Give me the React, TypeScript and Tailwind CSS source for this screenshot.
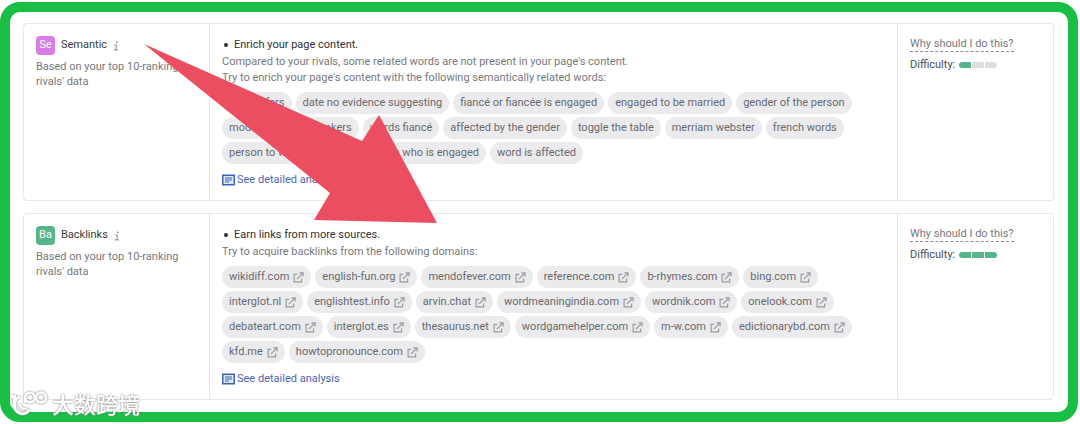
import type { ReactNode } from "react";

interface Suggestion {
  code: string;
  name: string;
  badge: string;
  title: string;
  lines: string[];
  chips: string[];
  external: boolean;
  difficulty: number;
}

const suggestions: Suggestion[] = [
  {
    code: "Se",
    name: "Semantic",
    badge: "bg-[#d87ce6]",
    title: "Enrich your page content.",
    lines: [
      "Compared to your rivals, some related words are not present in your page's content.",
      "Try to enrich your page's content with the following semantically related words:",
    ],
    chips: [
      "word refers",
      "date no evidence suggesting",
      "fiancé or fiancée is engaged",
      "engaged to be married",
      "gender of the person",
      "modern english speakers",
      "words fiancé",
      "affected by the gender",
      "toggle the table",
      "merriam webster",
      "french words",
      "person to whom",
      "man or woman who is engaged",
      "word is affected",
    ],
    external: false,
    difficulty: 1,
  },
  {
    code: "Ba",
    name: "Backlinks",
    badge: "bg-[#57b58b]",
    title: "Earn links from more sources.",
    lines: ["Try to acquire backlinks from the following domains:"],
    chips: [
      "wikidiff.com",
      "english-fun.org",
      "mendofever.com",
      "reference.com",
      "b-rhymes.com",
      "bing.com",
      "interglot.nl",
      "englishtest.info",
      "arvin.chat",
      "wordmeaningindia.com",
      "wordnik.com",
      "onelook.com",
      "debateart.com",
      "interglot.es",
      "thesaurus.net",
      "wordgamehelper.com",
      "m-w.com",
      "edictionarybd.com",
      "kfd.me",
      "howtopronounce.com",
    ],
    external: true,
    difficulty: 3,
  },
];

const ExternalIcon = () => (
  <svg viewBox="0 0 12 12" className="size-[11px] shrink-0" fill="none" stroke="#999a9e" strokeWidth="1.3">
    <path d="M4.6 2.6H1.2v8.2h8.2V7.2" />
    <path d="M4.2 7.8 10.6 1.4" />
    <path d="M7 1h4v4" />
  </svg>
);

const AnalysisIcon = () => (
  <svg viewBox="0 0 13 12" className="h-3 w-[13px] shrink-0" fill="none" stroke="#3d63b5">
    <rect x="0.75" y="1.25" width="11.5" height="9.5" fill="#dfe8f8" strokeWidth="1.5" />
    <path d="M3 4h7M3 6h7M3 8h4" strokeWidth="1.1" />
  </svg>
);

const Chip = ({ children }: { children: ReactNode }) => (
  <li className="flex h-[22px] items-center rounded-full bg-[#ebebed] px-[7px] text-[#68696d]">
    {children}
  </li>
);

const Difficulty = ({ level }: { level: number }) => (
  <div className="mt-1 flex items-center gap-1 leading-4 text-[#4b4c50]">
    <span>Difficulty:</span>
    <span className="flex gap-px overflow-hidden rounded-full" role="img" aria-label={`${level} of 3`}>
      {[1, 2, 3].map((step) => (
        <span
          key={step}
          className={`h-1.5 w-[12px] ${step <= level ? "bg-[#57b58b]" : "bg-[#dfdfe3]"}`}
        />
      ))}
    </span>
  </div>
);

const SuggestionCard = ({ item }: { item: Suggestion }) => (
  <section className="grid grid-cols-[185px_1fr_155px] rounded border border-[#e8e8ea]">
    <div className="py-3 pl-3 pr-4">
      <div className="flex items-center">
        <span
          className={`flex size-[19px] items-center justify-center rounded text-[11px] text-white ${item.badge}`}
        >
          {item.code}
        </span>
        <h2 className="ml-1.5 text-[#3b3c40]">{item.name}</h2>
        <button type="button" aria-label={`About ${item.name}`} className="ml-1.5">
          <svg viewBox="0 0 6 10" className="h-2.5 w-1.5" fill="none" stroke="#8b8c90" strokeWidth="1">
            <path d="M1.2 4h2.3L2.8 8.9M0.6 8.9h4.4" />
            <circle cx="3.8" cy="1.3" r="0.5" fill="#8b8c90" />
          </svg>
        </button>
      </div>
      <p className="mt-1 leading-[15px]">Based on your top 10-ranking rivals' data</p>
    </div>

    <div className="border-x border-[#e8e8ea] px-3 py-3">
      <ul className="list-none">
        <li className="flex items-center gap-1.5 pl-0.5 leading-[18px] text-[#303134]">
          <span className="size-1 rounded-full bg-[#303134]" />
          {item.title}
        </li>
      </ul>
      <div className="leading-4">
        {item.lines.map((line) => (
          <p key={line}>{line}</p>
        ))}
      </div>
      <ul className="mt-1.5 flex flex-wrap gap-x-1 gap-y-[3px]">
        {item.chips.map((chip) => (
          <Chip key={chip}>
            {item.external ? (
              <a href="#" className="flex items-center gap-1">
                {chip}
                <ExternalIcon />
              </a>
            ) : (
              chip
            )}
          </Chip>
        ))}
      </ul>
      <a href="#" className="mt-2 flex w-fit items-center gap-0.5 leading-4 text-[#4c65b0]">
        <AnalysisIcon />
        See detailed analysis
      </a>
    </div>

    <div className="p-3">
      <button type="button" className="border-b border-dashed border-[#8b8c90] leading-[15px]">
        Why should I do this?
      </button>
      <Difficulty level={item.difficulty} />
    </div>
  </section>
);

export default function App() {
  return (
    <div className="bg-white py-0.5 pr-0.5 font-['Roboto',sans-serif] text-[11px] text-[#77787c]">
      <main className="relative rounded-[20px] border-10 border-[#19bf45] px-[13px] pb-3 pt-[11px]">
        <div className="flex flex-col gap-3 pr-px">
          {suggestions.map((item) => (
            <SuggestionCard key={item.code} item={item} />
          ))}
        </div>

        {/* Arrow annotation */}
        <svg
          viewBox="0 0 294 180"
          className="pointer-events-none absolute left-[134px] top-8 h-[180px] w-[294px]"
          fill="#eb4e60"
          aria-hidden="true"
        >
          <path d="M0 0 218 97 235 71 293 179 170 176 186 149Z" />
        </svg>

        {/* Watermark */}
        <div className="absolute -bottom-1 left-0 flex items-center gap-1 text-white drop-shadow-[0_0_1px_#777]">
          <svg viewBox="0 0 38 26" className="h-[26px] w-[38px]" fill="none" stroke="currentColor">
            <path d="M1 6.5h3.5V15a8 8 0 0 0 15 4.5" strokeWidth="3" />
            <path d="M5 13a6 6 0 0 1 5-6" strokeWidth="2.5" />
            <path d="M10 14a4.5 4.5 0 0 0 7 4M15 13V7" strokeWidth="2.2" />
            <circle cx="20" cy="7.5" r="4.8" strokeWidth="2.5" />
            <circle cx="31" cy="7.5" r="5" strokeWidth="2.5" />
          </svg>
          <span className="font-['Noto_Sans_CJK_SC',sans-serif] text-[22px] font-medium leading-[26px]">
            大数跨境
          </span>
        </div>
      </main>
    </div>
  );
}
